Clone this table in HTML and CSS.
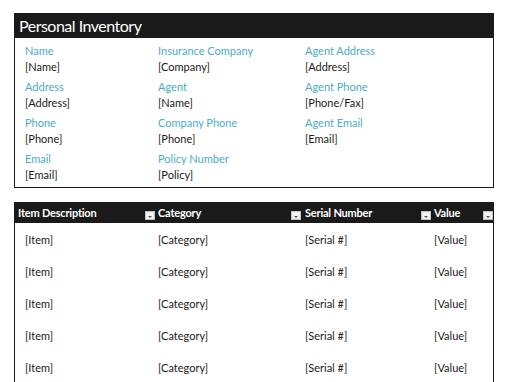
FILE: index.html
```html
<!DOCTYPE html>
<html>
<head>
<meta charset="utf-8">
<link rel="stylesheet" href="styles.css">
</head>
<body>
<section class="card">
  <div class="title">Personal Inventory</div>
  <div class="info">
    <div class="col">
      <div class="field"><div class="lbl">Name</div><div class="val">[Name]</div></div>
      <div class="field"><div class="lbl">Address</div><div class="val">[Address]</div></div>
      <div class="field"><div class="lbl">Phone</div><div class="val">[Phone]</div></div>
      <div class="field"><div class="lbl">Email</div><div class="val">[Email]</div></div>
    </div>
    <div class="col">
      <div class="field"><div class="lbl">Insurance Company</div><div class="val">[Company]</div></div>
      <div class="field"><div class="lbl">Agent</div><div class="val">[Name]</div></div>
      <div class="field"><div class="lbl">Company Phone</div><div class="val">[Phone]</div></div>
      <div class="field"><div class="lbl">Policy Number</div><div class="val">[Policy]</div></div>
    </div>
    <div class="col">
      <div class="field"><div class="lbl">Agent Address</div><div class="val">[Address]</div></div>
      <div class="field"><div class="lbl">Agent Phone</div><div class="val">[Phone/Fax]</div></div>
      <div class="field"><div class="lbl">Agent Email</div><div class="val">[Email]</div></div>
    </div>
  </div>
</section>

<section class="table">
  <div class="row head">
    <div class="cell c1"><span>Item Description</span><i class="dd"></i></div>
    <div class="cell c2"><span>Category</span><i class="dd"></i></div>
    <div class="cell c3"><span>Serial Number</span><i class="dd"></i></div>
    <div class="cell c4"><span>Value</span><i class="dd"></i></div>
  </div>
  <div class="row">
    <div class="cell c1 first">[Item]</div><div class="cell c2">[Category]</div><div class="cell c3">[Serial #]</div><div class="cell c4">[Value]</div>
  </div>
  <div class="row">
    <div class="cell c1 first">[Item]</div><div class="cell c2">[Category]</div><div class="cell c3">[Serial #]</div><div class="cell c4">[Value]</div>
  </div>
  <div class="row">
    <div class="cell c1 first">[Item]</div><div class="cell c2">[Category]</div><div class="cell c3">[Serial #]</div><div class="cell c4">[Value]</div>
  </div>
  <div class="row">
    <div class="cell c1 first">[Item]</div><div class="cell c2">[Category]</div><div class="cell c3">[Serial #]</div><div class="cell c4">[Value]</div>
  </div>
  <div class="row">
    <div class="cell c1 first">[Item]</div><div class="cell c2">[Category]</div><div class="cell c3">[Serial #]</div><div class="cell c4">[Value]</div>
  </div>
</section>
</body>
</html>
```

FILE: styles.css
```css
html, body {
  margin: 0;
  padding: 0;
  background: #ffffff;
}
body {
  padding: 13px 0 0 14px;
  font-family: Lato, "Open Sans", sans-serif;
  font-size: 11px;
  color: #1a1a1a;
  overflow: hidden;
  height: 382px;
  box-sizing: border-box;
}
.card {
  width: 480px;
  box-sizing: border-box;
  border: 1px solid #1a1a1a;
  border-top: none;
}
.title {
  height: 25px;
  margin: 0 -1px;
  background: #1a1a1a;
  color: #ffffff;
  font-size: 16px;
  letter-spacing: -0.5px;
  line-height: 26px;
  padding-left: 5px;
}
.info {
  display: grid;
  grid-template-columns: 133px 147px 1fr;
  padding: 5px 0 4px 10px;
}
.col {
  display: flex;
  flex-direction: column;
  gap: 4px;
}
.field {
  display: flex;
  flex-direction: column;
}
.lbl, .val {
  line-height: 16px;
  height: 16px;
  white-space: nowrap;
}
.lbl {
  color: #4bacc6;
}
.val {
  color: #1a1a1a;
}
.table {
  margin-top: 14px;
  width: 480px;
  box-sizing: border-box;
  border-left: 1px solid #1a1a1a;
  border-right: 1px solid #1a1a1a;
}
.row {
  display: grid;
  grid-template-columns: 141px 146px 130px 1fr;
  height: 32px;
}
.row.head {
  height: 21px;
  background: #1a1a1a;
  margin: 0 -1px;
  grid-template-columns: 142px 146px 130px 1fr;
  color: #ffffff;
  font-weight: 700;
  letter-spacing: -0.2px;
}
.cell {
  display: flex;
  align-items: center;
  white-space: nowrap;
}
.head .cell {
  justify-content: space-between;
}
.head .c1 { padding-left: 4px; }
.c2 { padding-left: 2px; }
.c3 { padding-left: 3px; }
.c4 { padding-left: 2px; }
.first { padding-left: 10px; }
.dd {
  align-self: flex-end;
  margin: 0 1px 3px 0;
  width: 10px;
  height: 9px;
  box-sizing: border-box;
  background: #f2f2f2;
  border: 1px solid #bdbdbd;
  display: flex;
  align-items: center;
  justify-content: center;
}
.dd::after {
  content: "";
  margin-top: 2px;
  width: 0;
  height: 0;
  border-left: 2.5px solid transparent;
  border-right: 2.5px solid transparent;
  border-top: 2.5px solid #555555;
}
```
